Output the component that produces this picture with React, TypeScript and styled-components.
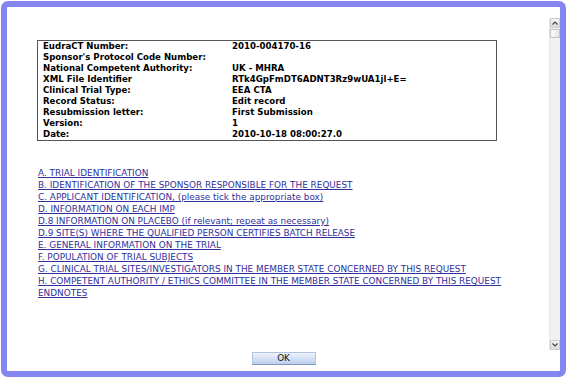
import styled, { createGlobalStyle } from 'styled-components';

const GlobalStyle = createGlobalStyle`
  html, body {
    margin: 0;
    padding: 0;
    background: #ffffff;
  }
  body {
    font-family: Tahoma, "DejaVu Sans", Verdana, sans-serif;
  }
`;

const Frame = styled.div`
  box-sizing: border-box;
  margin: 1px 0 0 1px;
  width: 565px;
  height: 376px;
  border: 6px solid #8585f2;
  border-radius: 7px;
  background: #ffffff;
  display: flex;
  flex-direction: column;
`;

const Pane = styled.div`
  margin-top: 11px;
  height: 332px;
  display: flex;
`;

const Content = styled.div`
  flex: 1;
  padding: 22px 0 0 30px;
`;

const Summary = styled.table`
  width: 460px;
  border: 1px solid #555555;
  border-collapse: collapse;
  font-size: 8.6px;
  font-weight: 700;
  color: #000000;
`;

const Row = styled.tr`
  height: 11px;
`;

const Label = styled.td`
  width: 189px;
  padding: 0 0 0 5px;
  line-height: 11px;
  white-space: nowrap;
`;

const Value = styled.td`
  padding: 0;
  line-height: 11px;
  white-space: nowrap;
`;

const Sections = styled.ul`
  list-style: none;
  margin: 24px 0 0 1px;
  padding: 0;
`;

const Section = styled.li`
  height: 12px;
  line-height: 12px;
`;

const SectionLink = styled.a`
  font-size: 8.9px;
  color: #30309a;
  text-decoration: underline;
  white-space: nowrap;
`;

const Scrollbar = styled.div`
  width: 10px;
  display: flex;
  flex-direction: column;
  background: #f1f1f3;
  border-left: 1px solid #e6e6e8;
`;

const ArrowButton = styled.div`
  height: 10px;
  display: flex;
  align-items: center;
  justify-content: center;
  background: linear-gradient(#f4f4f4, #dadada);
  border: 1px solid #cfcfcf;
  box-sizing: border-box;
`;

const Thumb = styled.div`
  height: 9px;
  margin-top: 1px;
  background: linear-gradient(90deg, #fbfbfb, #e6e6e6);
  border: 1px solid #c4c4c4;
  box-sizing: border-box;
`;

const Track = styled.div`
  flex: 1;
`;

const Footer = styled.div`
  display: flex;
  justify-content: center;
  padding-top: 2px;
`;

const OkButton = styled.button`
  width: 64px;
  height: 13px;
  padding: 0;
  border: 1px solid #b0c2dc;
  border-bottom-color: #8296bb;
  background: linear-gradient(#eef3fb, #bccfee);
  font-family: inherit;
  font-size: 8.8px;
  line-height: 11px;
  color: #111111;
  cursor: pointer;
`;

const rows: [string, string][] = [
  ['EudraCT Number:', '2010-004170-16'],
  ["Sponsor's Protocol Code Number:", ''],
  ['National Competent Authority:', 'UK - MHRA'],
  ['XML File Identifier', 'RTk4GpFmDT6ADNT3Rz9wUA1jl+E='],
  ['Clinical Trial Type:', 'EEA CTA'],
  ['Record Status:', 'Edit record'],
  ['Resubmission letter:', 'First Submission'],
  ['Version:', '1'],
  ['Date:', '2010-10-18 08:00:27.0'],
];

const sections = [
  'A. TRIAL IDENTIFICATION',
  'B. IDENTIFICATION OF THE SPONSOR RESPONSIBLE FOR THE REQUEST',
  'C. APPLICANT IDENTIFICATION, (please tick the appropriate box)',
  'D. INFORMATION ON EACH IMP',
  'D.8 INFORMATION ON PLACEBO (if relevant; repeat as necessary)',
  'D.9 SITE(S) WHERE THE QUALIFIED PERSON CERTIFIES BATCH RELEASE',
  'E. GENERAL INFORMATION ON THE TRIAL',
  'F. POPULATION OF TRIAL SUBJECTS',
  'G. CLINICAL TRIAL SITES/INVESTIGATORS IN THE MEMBER STATE CONCERNED BY THIS REQUEST',
  'H. COMPETENT AUTHORITY / ETHICS COMMITTEE IN THE MEMBER STATE CONCERNED BY THIS REQUEST',
  'ENDNOTES',
];

function Chevron({ up }: { up: boolean }) {
  return (
    <svg width="6" height="4" viewBox="0 0 6 4">
      <path
        d={up ? 'M0.5 3.5 L3 1 L5.5 3.5' : 'M0.5 0.5 L3 3 L5.5 0.5'}
        fill="none"
        stroke="#444"
        strokeWidth="1.2"
      />
    </svg>
  );
}

export default function App() {
  return (
    <>
      <GlobalStyle />
      <Frame>
        <Pane>
          <Content>
            <Summary>
              <tbody>
                {rows.map(([label, value]) => (
                  <Row key={label}>
                    <Label>{label}</Label>
                    <Value>{value}</Value>
                  </Row>
                ))}
              </tbody>
            </Summary>
            <Sections>
              {sections.map((s) => (
                <Section key={s}>
                  <SectionLink href="#">{s}</SectionLink>
                </Section>
              ))}
            </Sections>
          </Content>
          <Scrollbar>
            <ArrowButton>
              <Chevron up />
            </ArrowButton>
            <Thumb />
            <Track />
            <ArrowButton>
              <Chevron up={false} />
            </ArrowButton>
          </Scrollbar>
        </Pane>
        <Footer>
          <OkButton>OK</OkButton>
        </Footer>
      </Frame>
    </>
  );
}
